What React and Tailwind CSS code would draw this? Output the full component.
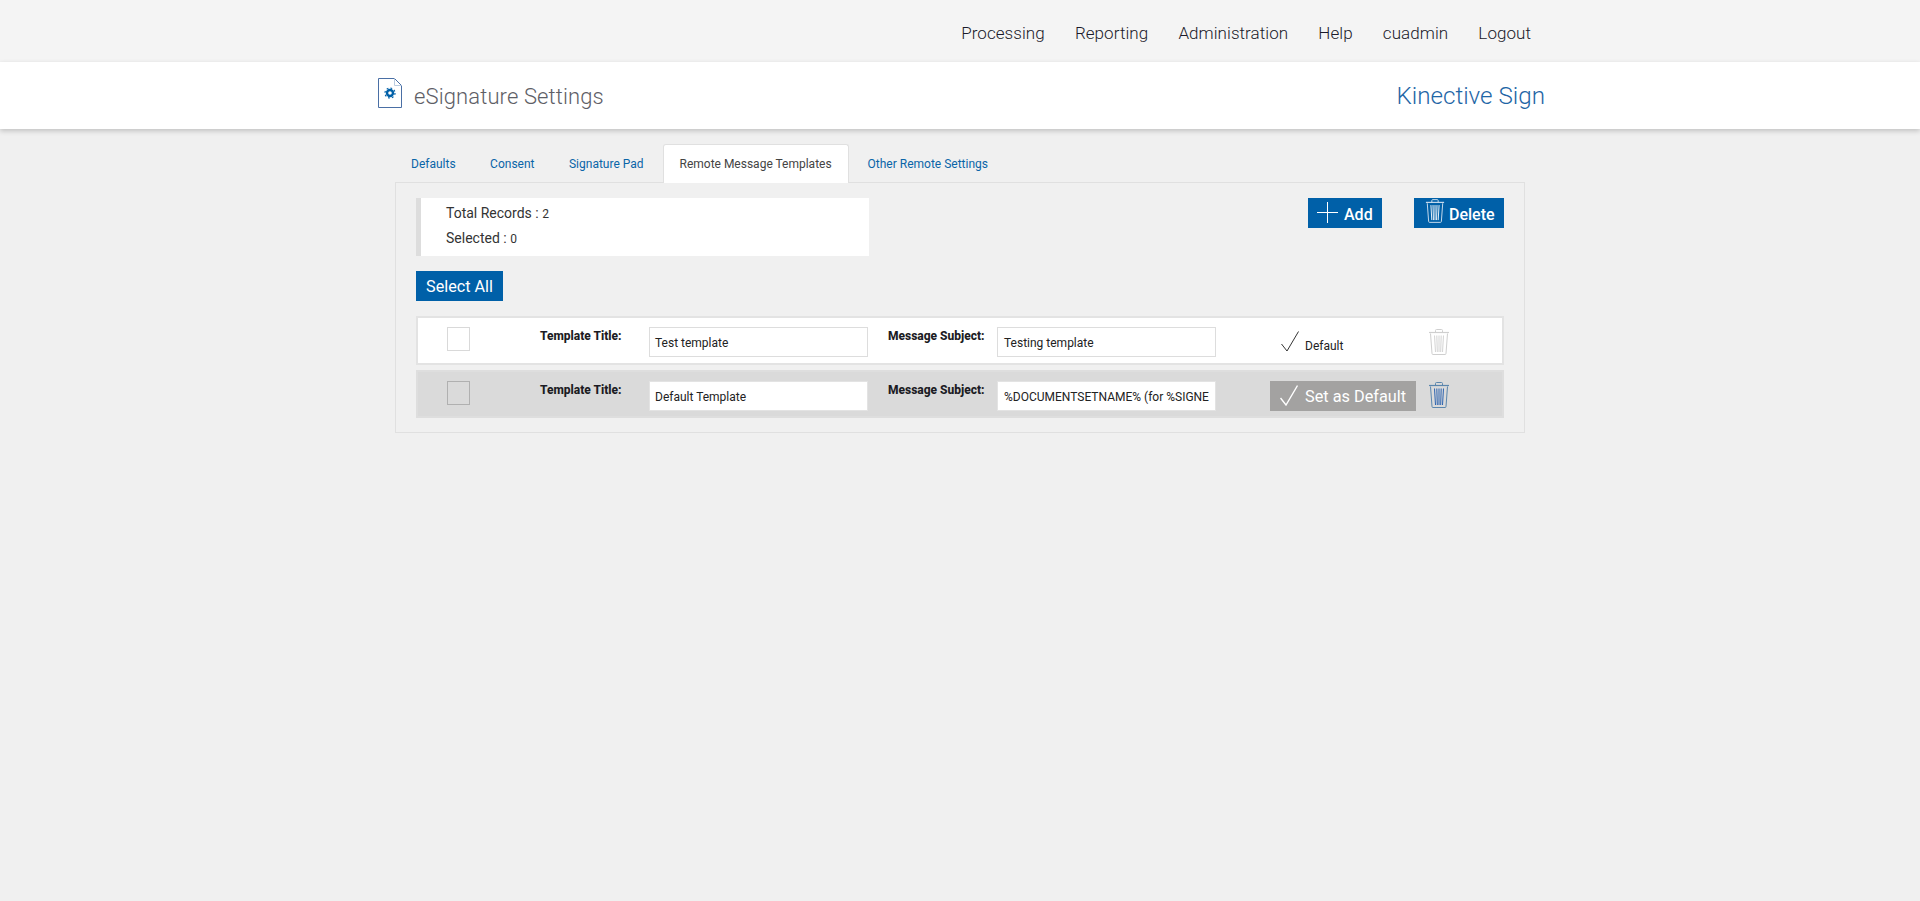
import React from 'react';

function TrashIcon({ color = '#0060a8', light = '#fff', className = '' }) {
  return (
    <svg viewBox="0 0 22 26" fill="none" stroke={color} strokeWidth="1" className={className}>
      <path d="M7.5 3.5V1.5q0-1 1-1h5q1 0 1 1v2" />
      <path d="M1 3.5h20" strokeWidth="1.2" />
      <path d="M2.5 4.5 4 24.5q0 1 1 1h12q1 0 1-1l1.5-20" />
      <path d="M6.5 6.5 7.5 23M11 6.5V23M15.5 6.5 14.5 23M8.8 6.5 9.3 23M13.2 6.5 12.7 23" stroke={light} />
    </svg>
  );
}

function CheckIcon({ color, width = 1, className = '' }) {
  return (
    <svg viewBox="0 0 18 21" fill="none" stroke={color} strokeWidth={width} className={className}>
      <path d="M.5 13 6 20 17.5.5" />
    </svg>
  );
}

function TemplateRow({ title, subject, isDefault }) {
  return (
    <div
      className={
        isDefault
          ? 'flex h-[49px] border-2 border-[#e3e3e3] bg-white'
          : 'flex h-[48px] border-2 border-[#dedede] bg-[#dadada]'
      }
    >
      <div
        className={
          isDefault
            ? 'ml-[29px] mt-[9px] h-6 w-[23px] border border-[#d9d9d9] bg-white'
            : 'ml-[29px] mt-[9px] h-6 w-[23px] border border-[#b0b0b0] bg-[#dadada]'
        }
      />
      <div className="ml-[70px] mt-[11px] w-[109px] text-[12px] leading-[14px] font-extrabold text-[#1c1c24]">
        Template Title:
      </div>
      <div
        className={
          isDefault
            ? 'mt-[9px] flex h-[30px] w-[219px] items-center border border-[#dddddd] bg-white pl-[5px] pt-[1px] text-[12px] text-[#222]'
            : 'mt-[9px] flex h-[30px] w-[219px] items-center border border-[#e3e3e3] bg-white pl-[5px] pt-[1px] text-[12px] text-[#222]'
        }
      >
        {title}
      </div>
      <div className="ml-5 mt-[11px] w-[109px] text-[12px] leading-[14px] font-extrabold text-[#1c1c24]">
        Message Subject:
      </div>
      <div
        className={
          isDefault
            ? 'mt-[9px] flex h-[30px] w-[219px] items-center border border-[#dddddd] bg-white pl-[6px] pt-[1px] text-[12px] whitespace-nowrap text-[#222]'
            : 'mt-[9px] flex h-[30px] w-[219px] items-center border border-[#e3e3e3] bg-white pl-[6px] pt-[1px] text-[12px] whitespace-nowrap text-[#222]'
        }
      >
        {subject}
      </div>
      {isDefault ? (
        <div className="ml-[65px] mt-[12px] flex h-[24px] w-[147px] items-end">
          <CheckIcon color="#333" className="mb-[2px] h-[21px] w-[18px]" />
          <span className="ml-[6px] text-[12px] leading-[16px] text-[#222]">Default</span>
        </div>
      ) : (
        <div className="ml-[54px] mt-[9px] flex h-[30px] w-[146px] items-center bg-[#a3a2a1] pl-[10px] text-[16.3px] text-white">
          <CheckIcon color="#fff" width={1.4} className="mb-[2px] h-[21px] w-[18px]" />
          <span className="ml-[7px] mt-[2px]">Set as Default</span>
        </div>
      )}
      <TrashIcon
        color={isDefault ? '#cfcfcf' : '#5b86ad'}
        light={isDefault ? '#d4d4d4' : '#2a62b0'}
        className={isDefault ? 'mt-[11px] h-[26px] w-[22px]' : 'ml-[12px] mt-[10px] h-[26px] w-[22px]'}
      />
    </div>
  );
}

export default function App() {
  const tabs = ['Defaults', 'Consent', 'Signature Pad'];
  const nav = ['Processing', 'Reporting', 'Administration', 'Help', 'cuadmin', 'Logout'];

  return (
    <div className="min-h-[901px] bg-[#f0f0f0] font-['Roboto',sans-serif]">
      <div className="flex h-[62px] items-center justify-end gap-[30.2px] bg-[#f4f4f4] pr-[389px] pt-[6px] text-[17px] font-light tracking-[0.06px] text-[#1a1a2a]">
        {nav.map((n) => (
          <span key={n}>{n}</span>
        ))}
      </div>

      <div className="flex h-[67px] items-center justify-between bg-white pl-[378px] pr-[375px] pt-[2px] shadow-[0_2px_5px_rgba(0,0,0,0.2)]">
        <div className="flex items-center">
          <svg viewBox="0 0 24 30" fill="none" className="mb-[8px] h-[30px] w-6">
            <path d="M.5.5h16l7 7v22H.5z" stroke="#4a6fa5" />
            <path d="M16.5.5v7h7" stroke="#b9cbe0" />
            <circle cx="12" cy="15" r="3" stroke="#0060a8" strokeWidth="2.4" />
            <circle cx="12" cy="15" r="5" stroke="#0060a8" strokeWidth="1.2" strokeDasharray="1.8 2.1" />
          </svg>
          <span className="ml-3 text-[22px] font-light tracking-[0.12px] text-[#5e5e66]">eSignature Settings</span>
        </div>
        <span className="text-[24.2px] font-light text-[#1f66a6]">Kinective Sign</span>
      </div>

      <div className="ml-[395px] w-[1130px] pt-[15px]">
        <div className="flex h-[38px] items-center pl-4 pt-[1px] text-[12px] text-[#0a65a8]">
          {tabs.map((t) => (
            <span key={t} className="mr-[34.5px]">
              {t}
            </span>
          ))}
          <span className="relative z-10 ml-[-15.5px] flex h-[39px] w-[186px] items-center justify-center rounded-t-[3px] border border-b-0 border-[#e0e0e0] bg-white text-[#444]">
            Remote Message Templates
          </span>
          <span className="ml-[19px]">Other Remote Settings</span>
        </div>

        <div className="h-[251px] border border-[#e0e0e0] px-5 pt-[15px]">
          <div className="flex items-start justify-between">
            <div className="h-[58px] w-[453px] border-l-[5px] border-[#dddddd] bg-white pl-[25px] pt-[3px] text-[14px] leading-[24px] text-[#333]">
              <div>
                Total Records : <span className="text-[12px]">2</span>
              </div>
              <div>
                Selected : <span className="text-[12px]">0</span>
              </div>
            </div>
            <div className="flex gap-8">
              <button className="flex h-[30px] w-[74px] items-center bg-[#0060a8] pl-[9px] text-[16px] font-medium text-white">
                <svg viewBox="0 0 21 21" stroke="#fff" className="mb-[2px] h-[21px] w-[21px]">
                  <path d="M0 10.5h21M10.5 0v21" />
                </svg>
                <span className="ml-[6px] mt-[3px]">Add</span>
              </button>
              <button className="flex h-[30px] w-[90px] items-center bg-[#0060a8] pl-[11px] text-[16px] font-medium text-white">
                <TrashIcon color="#d5e4f2" light="#fff" className="mb-[4px] h-[24px] w-[20px]" />
                <span className="ml-[4px] mt-[3px]">Delete</span>
              </button>
            </div>
          </div>

          <button className="mt-[15px] block h-[30px] w-[87px] bg-[#0060a8] pt-[2px] text-[16.2px] text-white">
            Select All
          </button>

          <div className="mt-[15px] flex flex-col gap-[5px]">
            <TemplateRow title="Test template" subject="Testing template" isDefault />
            <TemplateRow title="Default Template" subject="%DOCUMENTSETNAME% (for %SIGNE" isDefault={false} />
          </div>
        </div>
      </div>
    </div>
  );
}
